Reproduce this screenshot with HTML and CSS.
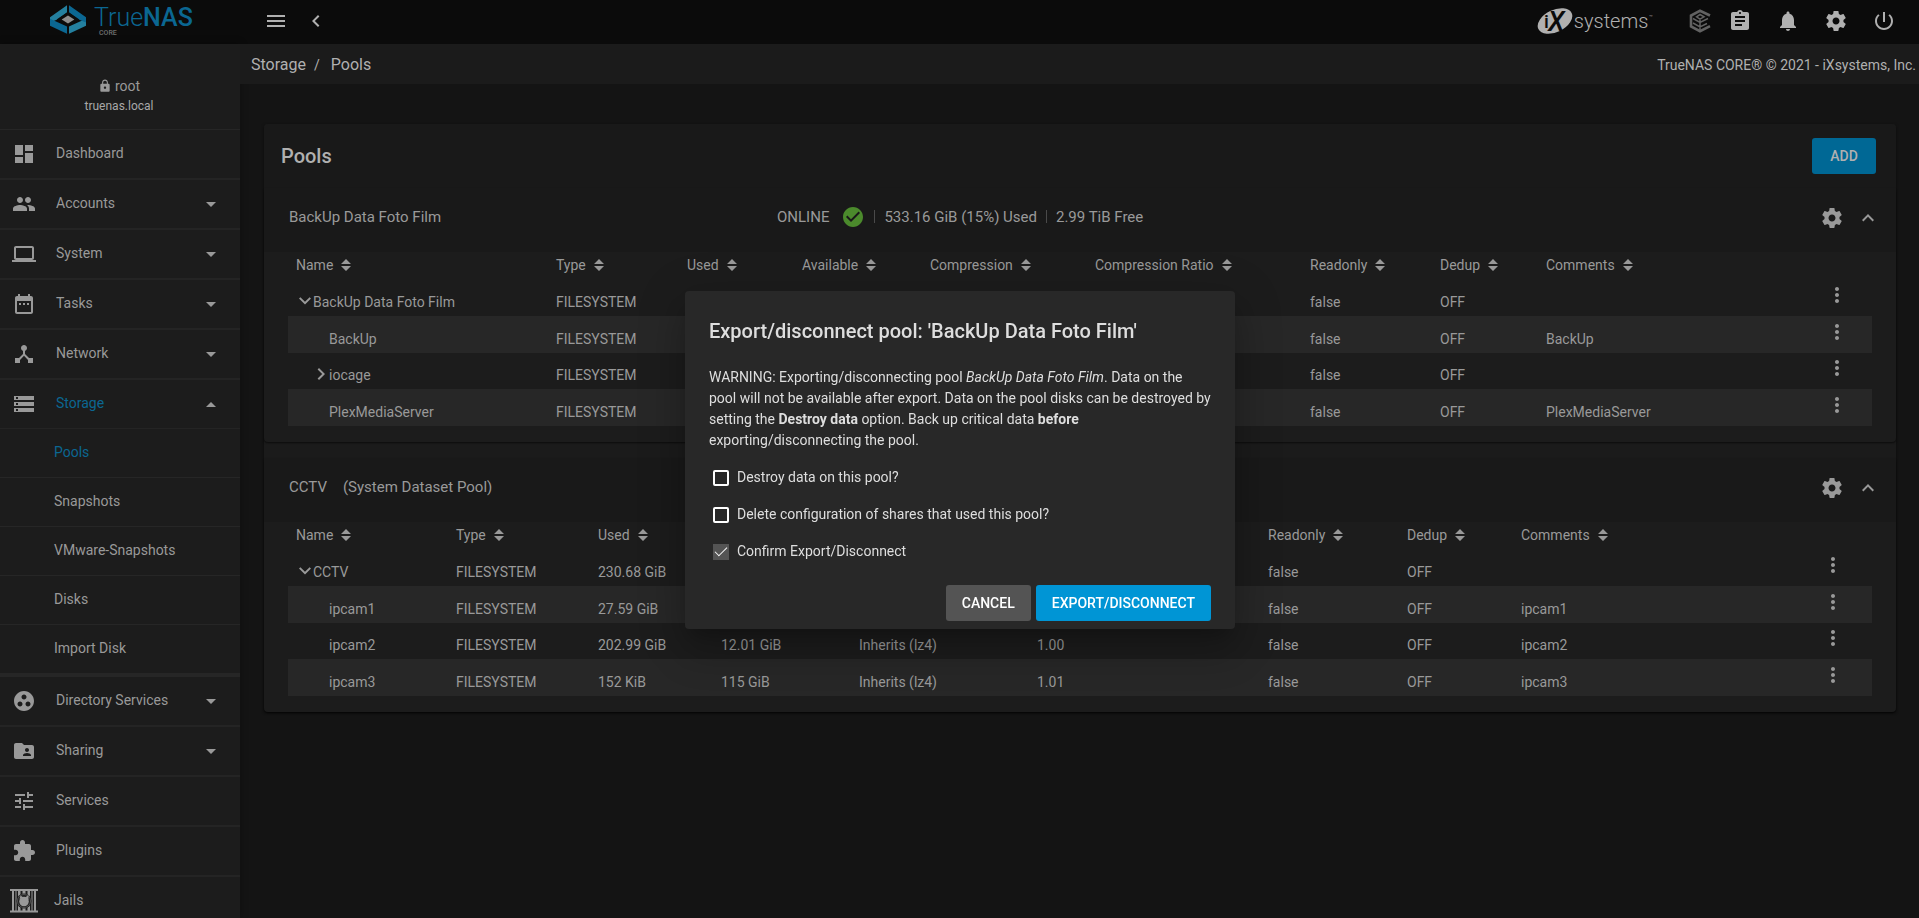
FILE: index.html
```html
<!DOCTYPE html>
<html lang="en">
<head>
<meta charset="utf-8">
<title>TrueNAS - Pools</title>
<link rel="stylesheet" href="styles.css">
</head>
<body>
<svg class="sprite" aria-hidden="true">
  <symbol id="menu" viewBox="0 0 24 24"><path d="M3 18h18v-2H3v2zm0-5h18v-2H3v2zm0-7v2h18V6H3z"/></symbol>
  <symbol id="left" viewBox="0 0 24 24"><path d="M15.41 7.41L14 6l-6 6 6 6 1.41-1.41L10.83 12z"/></symbol>
  <symbol id="up" viewBox="0 0 24 24"><path d="M7.41 15.41L12 10.83l4.59 4.58L18 14l-6-6-6 6z"/></symbol>
  <symbol id="open" viewBox="0 0 12 12"><path d="M1.4 2.2L6 6.8l4.6-4.6L12 3.6l-6 6-6-6z"/></symbol>
  <symbol id="closed" viewBox="0 0 12 12"><path d="M2.6 1.4L7.2 6l-4.6 4.6L4 12l6-6-6-6z"/></symbol>
  <symbol id="drop" viewBox="0 0 10 5"><path d="M0 0l5 5 5-5z"/></symbol>
  <symbol id="rise" viewBox="0 0 10 5"><path d="M0 5l5-5 5 5z"/></symbol>
  <symbol id="sort" viewBox="0 0 10 12"><path d="M0 5l5-5 5 5zM0 7l5 5 5-5z"/></symbol>
  <symbol id="dots" viewBox="0 0 24 24"><path d="M12 8c1.1 0 2-.9 2-2s-.9-2-2-2-2 .9-2 2 .9 2 2 2zm0 2c-1.100 0-2 .9-2 2s.9 2 2 2 2-.9 2-2-.9-2-2-2zm0 6c-1.100 0-2 .9-2 2s.9 2 2 2 2-.9 2-2-.9-2-2-2z"/></symbol>
  <symbol id="gear" viewBox="0 0 24 24"><path d="M19.43 12.98c.04-.32.07-.64.07-.98s-.03-.66-.07-.98l2.11-1.65c.19-.15.24-.42.12-.64l-2-3.46c-.12-.22-.39-.3-.61-.22l-2.49 1c-.52-.4-1.08-.73-1.69-.98l-.38-2.65C14.46 2.18 14.25 2 14 2h-4c-.25 0-.46.18-.49.42l-.38 2.65c-.61.25-1.17.59-1.69.98l-2.49-1c-.23-.09-.49 0-.61.22l-2 3.46c-.13.22-.07.49.12.64l2.110 1.650c-.04.32-.07.65-.07.98s.03.66.07.98l-2.110 1.650c-.19.15-.24.42-.12.64l2 3.460c.12.22.39.3.61.22l2.490-1c.52.4 1.080.73 1.690.98l.38 2.650c.03.24.24.42.49.42h4c.25 0 .46-.18.49-.42l.38-2.650c.61-.25 1.170-.59 1.690-.98l2.490 1c.23.09.49 0 .61-.22l2-3.460c.12-.22.07-.49-.12-.64l-2.110-1.650zM12 15.500c-1.930 0-3.500-1.570-3.500-3.500s1.570-3.500 3.500-3.500 3.500 1.570 3.500 3.500-1.570 3.500-3.500 3.500z"/></symbol>
  <symbol id="bell" viewBox="0 0 24 24"><path d="M12 22c1.1 0 2-.9 2-2h-4c0 1.1.89 2 2 2zm6-6v-5c0-3.070-1.640-5.640-4.500-6.320V4c0-.83-.67-1.500-1.500-1.500s-1.500.67-1.500 1.500v.68C7.630 5.360 6 7.920 6 11v5l-2 2v1h16v-1l-2-2z"/></symbol>
  <symbol id="clipboard" viewBox="0 0 24 24"><path d="M19 3h-4.180C14.400 1.840 13.300 1 12 1c-1.300 0-2.400.84-2.820 2H5c-1.100 0-2 .9-2 2v14c0 1.100.9 2 2 2h14c1.100 0 2-.9 2-2V5c0-1.100-.9-2-2-2zm-7 0c.55 0 1 .45 1 1s-.45 1-1 1-1-.45-1-1 .45-1 1-1zm2 14H7v-2h7v2zm3-4H7v-2h10v2zm0-4H7V7h10v2z"/></symbol>
  <symbol id="power" viewBox="0 0 24 24"><path d="M13 3h-2v10h2V3zm4.830 2.170l-1.420 1.420C17.990 7.860 19 9.810 19 12c0 3.870-3.130 7-7 7s-7-3.130-7-7c0-2.190 1.010-4.140 2.580-5.420L6.170 5.170C4.230 6.820 3 9.260 3 12c0 4.970 4.030 9 9 9s9-4.030 9-9c0-2.740-1.230-5.180-3.170-6.830z"/></symbol>
  <symbol id="lock" viewBox="0 0 24 24"><path d="M18 8h-1V6c0-2.760-2.240-5-5-5S7 3.240 7 6v2H6c-1.100 0-2 .9-2 2v10c0 1.100.9 2 2 2h12c1.100 0 2-.9 2-2V10c0-1.100-.9-2-2-2zm-6 9c-1.100 0-2-.9-2-2s.9-2 2-2 2 .9 2 2-.9 2-2 2zm3.100-9H8.900V6c0-1.710 1.390-3.100 3.100-3.100s3.100 1.390 3.100 3.100v2z"/></symbol>
  <symbol id="ok" viewBox="0 0 24 24"><path d="M12 2C6.480 2 2 6.480 2 12s4.480 10 10 10 10-4.480 10-10S17.520 2 12 2zm-2 15l-5-5 1.410-1.410L10 14.170l7.590-7.590L19 8l-9 9z"/></symbol>
  <symbol id="dashboard" viewBox="0 0 24 24"><path d="M3 13h8V3H3v10zm0 8h8v-6H3v6zm10 0h8V11h-8v10zm0-18v6h8V3h-8z"/></symbol>
  <symbol id="people" viewBox="0 0 24 24"><path d="M16 11c1.660 0 2.990-1.340 2.990-3S17.660 5 16 5s-3 1.340-3 3 1.340 3 3 3zm-8 0c1.660 0 2.990-1.340 2.990-3S9.660 5 8 5 5 6.340 5 8s1.340 3 3 3zm0 2c-2.330 0-7 1.170-7 3.500V19h14v-2.500c0-2.330-4.670-3.500-7-3.500zm8 0c-.29 0-.62.02-.97.05 1.160.84 1.970 1.970 1.970 3.450V19h6v-2.500c0-2.330-4.670-3.500-7-3.500z"/></symbol>
  <symbol id="laptop" viewBox="0 0 24 24"><path d="M20 18c1.100 0 1.990-.9 1.990-2L22 6c0-1.100-.9-2-2-2H4c-1.100 0-2 .9-2 2v10c0 1.100.9 2 2 2H0v2h24v-2h-4zM4 6h16v10H4V6z"/></symbol>
  <symbol id="calendar" viewBox="0 0 24 24"><path d="M9 11H7v2h2v-2zm4 0h-2v2h2v-2zm4 0h-2v2h2v-2zm2-7h-1V2h-2v2H8V2H6v2H5c-1.110 0-1.990.9-1.990 2L3 20c0 1.100.89 2 2 2h14c1.100 0 2-.9 2-2V6c0-1.100-.9-2-2-2zm0 16H5V9h14v11z"/></symbol>
  <symbol id="hub" viewBox="0 0 24 24"><path d="M17 16l-4-4V8.820C14.160 8.400 15 7.300 15 6c0-1.660-1.340-3-3-3S9 4.340 9 6c0 1.300.84 2.400 2 2.820V12l-4 4H3v5h5v-3.050l4-4.200 4 4.200V21h5v-5h-4z"/></symbol>
  <symbol id="storage" viewBox="0 0 24 24"><path d="M2 20h20v-4H2v4zm2-3h2v2H4v-2zM2 4v4h20V4H2zm4 3H4V5h2v2zm-4 7h20v-4H2v4zm2-3h2v2H4v-2z"/></symbol>
  <symbol id="group" viewBox="0 0 24 24"><path d="M12 2C6.480 2 2 6.480 2 12s4.480 10 10 10 10-4.480 10-10S17.520 2 12 2zM8 17.500c-1.380 0-2.500-1.120-2.500-2.500s1.120-2.500 2.500-2.500 2.500 1.120 2.500 2.500-1.120 2.500-2.500 2.500zM9.500 8c0-1.380 1.120-2.500 2.500-2.500s2.500 1.120 2.500 2.500-1.120 2.500-2.500 2.500S9.500 9.380 9.500 8zm6.500 9.500c-1.380 0-2.500-1.120-2.500-2.500s1.120-2.500 2.500-2.500 2.500 1.120 2.500 2.500-1.120 2.500-2.500 2.500z"/></symbol>
  <symbol id="shared" viewBox="0 0 24 24"><path d="M20 6h-8l-2-2H4c-1.100 0-1.990.9-1.990 2L2 18c0 1.100.9 2 2 2h16c1.100 0 2-.9 2-2V8c0-1.100-.9-2-2-2zm-5 3c1.100 0 2 .9 2 2s-.9 2-2 2-2-.9-2-2 .9-2 2-2zm4 8h-8v-1c0-1.330 2.670-2 4-2s4 .67 4 2v1z"/></symbol>
  <symbol id="tune" viewBox="0 0 24 24"><path d="M3 17v2h6v-2H3zM3 5v2h10V5H3zm10 16v-2h8v-2h-8v-2h-2v6h2zM7 9v2H3v2h4v2h2V9H7zm14 4v-2H11v2h10zm-6-4h2V7h4V5h-4V3h-2v6z"/></symbol>
  <symbol id="plugin" viewBox="0 0 24 24"><path d="M20.500 11H19V7c0-1.100-.9-2-2-2h-4V3.500C13 2.120 11.880 1 10.500 1S8 2.120 8 3.500V5H4c-1.100 0-1.990.9-1.990 2v3.800H3.500c1.490 0 2.700 1.210 2.700 2.700s-1.210 2.700-2.700 2.700H2V20c0 1.100.9 2 2 2h3.800v-1.500c0-1.490 1.210-2.700 2.700-2.700s2.700 1.210 2.700 2.700V22H17c1.100 0 2-.9 2-2v-4h1.500c1.380 0 2.500-1.120 2.500-2.500S21.880 11 20.500 11z"/></symbol>
  <symbol id="jail" viewBox="0 0 28 24">
    <path d="M0 0h28v2H0zM0 21.500h28v2H0zM2 2h2v20H2zM5.500 2h1v20h-1zM8 2h2.500v20H8zM12.500 2h3v20h-3zM17.500 2H20v20h-2.500zM21.500 2h1v20h-1zM24 2h2v20h-2z"/>
    <circle cx="14" cy="12" r="7.500" fill="#1c1c1c"/>
    <circle cx="14" cy="12" r="6.500" fill="none" stroke="#777" stroke-width=".6"/>
    <circle cx="14" cy="12.500" r="4.800"/>
    <path d="M9.500 10l1-3.500 3 2zM15 8.500l3.500-2.500v5z"/>
  </symbol>
</svg>

<div class="app">
  <header class="topbar">
    <a class="brand" href="#">
      <svg class="cube" viewBox="0 0 108 86" aria-hidden="true">
        <path fill="#24809f" d="M0 36L51 0v22L22 43 0 52zM57 64l51-23v21L57 86z"/>
        <path fill="#0b6792" d="M57 0l51 36v16l-22-9-29-21zM0 41l51 23v22L0 62z"/>
        <path fill="#0b0b0b" d="M54 20l34 23-34 20-34-20z"/>
        <path fill="#8d8d8d" d="M54 31l19 12-19 12-19-12z"/>
      </svg>
      <span class="wordmark"><span class="brand-name">True<b>NAS</b></span><small>CORE</small></span>
    </a>
    <div class="tools">
      <button class="tool narrow" aria-label="Toggle menu"><svg class="i24"><use href="#menu"/></svg></button>
      <button class="tool narrow" aria-label="Collapse"><svg class="i24"><use href="#left"/></svg></button>
      <a class="vendor" href="#">
        <svg class="vendor-mark" viewBox="0 0 36 34">
          <ellipse cx="18" cy="17" rx="18.500" ry="11" transform="rotate(-26 18 17)" fill="#b0b0b0"/>
          <text x="7" y="24" font-size="19" font-weight="500" fill="#0b0b0b">i</text>
          <text x="11" y="27" font-size="27" font-weight="500" font-style="italic" fill="#0b0b0b">X</text>
        </svg>
        <span>systems</span><small>™</small>
      </a>
      <button class="tool slim" aria-label="TrueCommand">
        <svg class="i24" viewBox="0 0 24 24" fill="none" stroke="#626262">
          <path d="M22 6.500L12 1.800 3 6.500v11l9 4.700 10-5" stroke-width="2.600"/>
          <path d="M12 10v11M5 9.500l7 4 8-4M5 14l7 4 7-3.500M8.500 7.800L12 5.500l4 2.300-4 2.300z" stroke-width="1.500"/>
        </svg>
      </button>
      <button class="tool" aria-label="Task manager"><svg class="i24"><use href="#clipboard"/></svg></button>
      <button class="tool" aria-label="Alerts"><svg class="i24"><use href="#bell"/></svg></button>
      <button class="tool" aria-label="Settings"><svg class="i24"><use href="#gear"/></svg></button>
      <button class="tool" aria-label="Power"><svg class="i24"><use href="#power"/></svg></button>
    </div>
  </header>

  <aside class="sidebar">
    <div class="user">
      <div class="user-name"><svg class="i14"><use href="#lock"/></svg>root</div>
      <div class="host">truenas.local</div>
    </div>
    <nav>
      <a class="item" href="#"><svg class="i24"><use href="#dashboard"/></svg><span>Dashboard</span></a>
      <a class="item" href="#"><svg class="i24"><use href="#people"/></svg><span>Accounts</span><svg class="caret"><use href="#drop"/></svg></a>
      <a class="item" href="#"><svg class="i24"><use href="#laptop"/></svg><span>System</span><svg class="caret"><use href="#drop"/></svg></a>
      <a class="item" href="#"><svg class="i24"><use href="#calendar"/></svg><span>Tasks</span><svg class="caret"><use href="#drop"/></svg></a>
      <a class="item" href="#"><svg class="i24"><use href="#hub"/></svg><span>Network</span><svg class="caret"><use href="#drop"/></svg></a>
      <a class="item open" href="#"><svg class="i24"><use href="#storage"/></svg><span>Storage</span><svg class="caret"><use href="#rise"/></svg></a>
      <div class="subnav">
        <a class="sub current" href="#">Pools</a>
        <a class="sub" href="#">Snapshots</a>
        <a class="sub" href="#">VMware-Snapshots</a>
        <a class="sub" href="#">Disks</a>
        <a class="sub" href="#">Import Disk</a>
      </div>
      <a class="item" href="#"><svg class="i24"><use href="#group"/></svg><span>Directory Services</span><svg class="caret"><use href="#drop"/></svg></a>
      <a class="item" href="#"><svg class="i24"><use href="#shared"/></svg><span>Sharing</span><svg class="caret"><use href="#drop"/></svg></a>
      <a class="item" href="#"><svg class="i24"><use href="#tune"/></svg><span>Services</span></a>
      <a class="item" href="#"><svg class="i24"><use href="#plugin"/></svg><span>Plugins</span></a>
      <a class="item jails" href="#"><svg class="i28"><use href="#jail"/></svg><span>Jails</span></a>
    </nav>
  </aside>

  <main class="main">
    <div class="crumbs">
      <nav class="trail"><a href="#">Storage</a><span class="slash">/</span><a href="#">Pools</a></nav>
      <span class="copyright">TrueNAS CORE® © 2021 - iXsystems, Inc.</span>
    </div>

    <section class="card">
      <div class="card-head">
        <h1>Pools</h1>
        <button class="btn add">ADD</button>
      </div>

      <section class="pool">
        <div class="pool-head">
          <div class="pool-name">BackUp Data Foto Film</div>
          <div class="status"><span>ONLINE</span><svg class="i24 ok"><use href="#ok"/></svg><i class="bar"></i><span>533.16 GiB (15%) Used</span><i class="bar"></i><span>2.99 TiB Free</span></div>
          <div class="pool-tools">
            <button class="icon" aria-label="Pool settings"><svg class="i24"><use href="#gear"/></svg></button>
            <button class="icon" aria-label="Collapse pool"><svg class="i24"><use href="#up"/></svg></button>
          </div>
        </div>
        <div class="pool-body">
          <table class="grid backup">
            <colgroup><col class="c1"><col class="c2"><col class="c3"><col class="c4"><col class="c5"><col class="c6"><col class="c7"><col class="c8"><col><col class="c10"></colgroup>
            <thead><tr>
              <th>Name<svg class="sort"><use href="#sort"/></svg></th><th>Type<svg class="sort"><use href="#sort"/></svg></th><th>Used<svg class="sort"><use href="#sort"/></svg></th><th>Available<svg class="sort"><use href="#sort"/></svg></th><th>Compression<svg class="sort"><use href="#sort"/></svg></th><th>Compression Ratio<svg class="sort"><use href="#sort"/></svg></th><th>Readonly<svg class="sort"><use href="#sort"/></svg></th><th>Dedup<svg class="sort"><use href="#sort"/></svg></th><th>Comments<svg class="sort"><use href="#sort"/></svg></th><th></th>
            </tr></thead>
            <tbody>
              <tr><td><svg class="twist"><use href="#open"/></svg>BackUp Data Foto Film</td><td>FILESYSTEM</td><td></td><td></td><td></td><td></td><td>false</td><td>OFF</td><td></td><td class="more"><button class="icon" aria-label="Options"><svg class="i24"><use href="#dots"/></svg></button></td></tr>
              <tr><td class="leaf">BackUp</td><td>FILESYSTEM</td><td></td><td></td><td></td><td></td><td>false</td><td>OFF</td><td>BackUp</td><td class="more"><button class="icon" aria-label="Options"><svg class="i24"><use href="#dots"/></svg></button></td></tr>
              <tr><td class="branch"><svg class="twist"><use href="#closed"/></svg>iocage</td><td>FILESYSTEM</td><td></td><td></td><td></td><td></td><td>false</td><td>OFF</td><td></td><td class="more"><button class="icon" aria-label="Options"><svg class="i24"><use href="#dots"/></svg></button></td></tr>
              <tr><td class="leaf">PlexMediaServer</td><td>FILESYSTEM</td><td></td><td></td><td></td><td></td><td>false</td><td>OFF</td><td>PlexMediaServer</td><td class="more"><button class="icon" aria-label="Options"><svg class="i24"><use href="#dots"/></svg></button></td></tr>
            </tbody>
          </table>
        </div>
      </section>

      <section class="pool">
        <div class="pool-head">
          <div class="pool-name">CCTV<span class="note">(System Dataset Pool)</span></div>
          <div class="status"></div>
          <div class="pool-tools">
            <button class="icon" aria-label="Pool settings"><svg class="i24"><use href="#gear"/></svg></button>
            <button class="icon" aria-label="Collapse pool"><svg class="i24"><use href="#up"/></svg></button>
          </div>
        </div>
        <div class="pool-body">
          <table class="grid cctv">
            <colgroup><col class="c1"><col class="c2"><col class="c3"><col class="c4"><col class="c5"><col class="c6"><col class="c7"><col class="c8"><col><col class="c10"></colgroup>
            <thead><tr>
              <th>Name<svg class="sort"><use href="#sort"/></svg></th><th>Type<svg class="sort"><use href="#sort"/></svg></th><th>Used<svg class="sort"><use href="#sort"/></svg></th><th></th><th></th><th></th><th>Readonly<svg class="sort"><use href="#sort"/></svg></th><th>Dedup<svg class="sort"><use href="#sort"/></svg></th><th>Comments<svg class="sort"><use href="#sort"/></svg></th><th></th>
            </tr></thead>
            <tbody>
              <tr><td><svg class="twist"><use href="#open"/></svg>CCTV</td><td>FILESYSTEM</td><td>230.68 GiB</td><td></td><td></td><td></td><td>false</td><td>OFF</td><td></td><td class="more"><button class="icon" aria-label="Options"><svg class="i24"><use href="#dots"/></svg></button></td></tr>
              <tr><td class="leaf">ipcam1</td><td>FILESYSTEM</td><td>27.59 GiB</td><td></td><td></td><td></td><td>false</td><td>OFF</td><td>ipcam1</td><td class="more"><button class="icon" aria-label="Options"><svg class="i24"><use href="#dots"/></svg></button></td></tr>
              <tr><td class="leaf">ipcam2</td><td>FILESYSTEM</td><td>202.99 GiB</td><td>12.01 GiB</td><td>Inherits (lz4)</td><td>1.00</td><td>false</td><td>OFF</td><td>ipcam2</td><td class="more"><button class="icon" aria-label="Options"><svg class="i24"><use href="#dots"/></svg></button></td></tr>
              <tr><td class="leaf">ipcam3</td><td>FILESYSTEM</td><td>152 KiB</td><td>115 GiB</td><td>Inherits (lz4)</td><td>1.01</td><td>false</td><td>OFF</td><td>ipcam3</td><td class="more"><button class="icon" aria-label="Options"><svg class="i24"><use href="#dots"/></svg></button></td></tr>
            </tbody>
          </table>
        </div>
      </section>
    </section>
  </main>
</div>

<div class="backdrop">
  <form class="dialog" role="dialog" aria-labelledby="dlg-title">
    <h2 id="dlg-title">Export/disconnect pool: 'BackUp Data Foto Film'</h2>
    <p>WARNING: Exporting/disconnecting pool <em>BackUp Data Foto Film</em>. Data on the pool will not be available after export. Data on the pool disks can be destroyed by setting the <b>Destroy data</b> option. Back up critical data <b>before</b> exporting/disconnecting the pool.</p>
    <label class="check"><input type="checkbox"><span>Destroy data on this pool?</span></label>
    <label class="check"><input type="checkbox"><span>Delete configuration of shares that used this pool?</span></label>
    <label class="check"><input type="checkbox" checked><span>Confirm Export/Disconnect</span></label>
    <div class="actions">
      <button type="button" class="btn cancel">CANCEL</button>
      <button type="button" class="btn primary">EXPORT/DISCONNECT</button>
    </div>
  </form>
</div>
</body>
</html>
```

FILE: styles.css
```css
* { box-sizing: border-box; }

body {
  margin: 0;
  background: #141414;
  color: #999;
  font: 14px/20px Roboto, "Liberation Sans", sans-serif;
}

a { color: inherit; text-decoration: none; }
h1, h2, p { margin: 0; }

button {
  font: inherit;
  color: inherit;
  background: none;
  border: 0;
  padding: 0;
}

svg { fill: currentColor; display: block; flex: none; }
svg[fill="none"] { fill: none; }
.sprite { position: absolute; width: 0; height: 0; }
.i14 { width: 14px; height: 14px; }
.i24 { width: 24px; height: 24px; }
.i28 { width: 28px; height: 24px; }

.app {
  display: grid;
  grid-template-columns: 240px minmax(0, 1fr);
  grid-template-rows: 44px minmax(0, 1fr);
  height: 100vh;
  overflow: hidden;
}

/* Top bar */
.topbar {
  grid-column: 1 / -1;
  display: grid;
  grid-template-columns: 240px 1fr;
  background: #0b0b0b;
  color: #b0b0b0;
}
.brand {
  display: flex;
  gap: 8px;
  padding: 5px 0 0 50px;
  color: #0b6792;
}
.cube { width: 36px; height: 29px; }
.wordmark { display: flex; flex-direction: column; }
.brand-name { font-size: 25px; line-height: 25px; font-weight: 300; }
.brand-name b { font-weight: 500; }
.wordmark small {
  font-size: 7px;
  line-height: 6px;
  font-weight: 500;
  padding-left: 5px;
  color: #707070;
}
.tools { display: flex; align-items: center; padding: 0 11px 2px 16px; }
.tool { width: 48px; height: 40px; display: flex; align-items: center; justify-content: center; }
.narrow { width: 40px; }
.slim { width: 32px; }
.vendor {
  display: flex;
  align-items: center;
  gap: 1px;
  margin: 0 31px 0 auto;
  font-size: 20px;
  font-weight: 300;
}
.vendor-mark { width: 36px; height: 34px; }
.vendor small { font-size: 6px; padding-bottom: 8px; }

/* Sidebar */
.sidebar {
  background: #1c1c1c;
  box-shadow: 0 0 8px rgba(0, 0, 0, .3);
  overflow: hidden;
}
.user {
  height: 86px;
  padding: 32px 2px 0 0;
  border-bottom: 1px solid #262626;
  text-align: center;
}
.user-name { display: flex; justify-content: center; align-items: center; gap: 3px; }
.host { font-size: 12px; color: #a8a8a8; }
.item {
  display: flex;
  align-items: center;
  height: 50px;
  padding: 0 24px 0 12px;
  border-bottom: 2px solid #242424;
}
.item span { flex: 1; padding: 0 0 2px 20px; }
.item.open { height: 49px; border-bottom-width: 1px; }
.item.open span, .sub.current { color: #0b6792; }
.item.jails { padding-left: 10px; }
.item.jails span { padding-left: 16px; }
.caret { width: 10px; height: 5px; }
.subnav { border-bottom: 3px solid #262626; }
.sub {
  display: flex;
  align-items: center;
  height: 49px;
  padding: 0 0 2px 54px;
  border-bottom: 1px solid #262626;
}

/* Breadcrumb row */
.crumbs {
  display: flex;
  justify-content: space-between;
  align-items: center;
  height: 40px;
  padding: 1px 3px 0 11px;
  background: #1b1b1b;
  color: #b0b0b0;
}
.trail { display: flex; font-size: 16px; }
.slash { padding: 0 11px 0 8px; font-size: 14px; }

/* Card */
.card {
  margin: 40px 23px 0 24px;
  background: #1b1b1b;
  border-radius: 4px;
  box-shadow: 0 1px 3px rgba(0, 0, 0, .5);
}
.card-head {
  display: flex;
  justify-content: space-between;
  align-items: center;
  height: 64px;
  padding: 0 20px 0 17px;
  background: #191919;
  border-radius: 4px 4px 0 0;
}
h1 { font-size: 20px; font-weight: 500; color: #b0b0b0; }
.btn {
  height: 36px;
  padding: 0 16px;
  border-radius: 3px;
  font-weight: 500;
}
.add { width: 64px; background: #006895; color: #b0b0b0; }

.pool {
  background: #1c1c1c;
  border-radius: 4px;
  box-shadow: 0 1px 2px rgba(0, 0, 0, .6);
}
.pool + .pool { margin-top: 16px; }
.pool-head {
  display: grid;
  grid-template-columns: 488px 1fr auto;
  align-items: center;
  height: 64px;
  padding: 0 16px 5px 25px;
  background: #191919;
  font-size: 15px;
}
.pool-name { padding-bottom: 2px; }
.note { padding-left: 16px; }
.status { display: flex; align-items: center; padding-bottom: 2px; }
.ok { color: #4b8a2c; margin-left: 12px; }
.bar { width: 1px; height: 13px; margin: 0 9px; background: #4a4a4a; }
.pool-tools { display: flex; gap: 12px; }
.pool-body { padding: 0 24px 16px; }

/* Dataset tables */
.grid { width: 100%; table-layout: fixed; border-collapse: collapse; }
.grid th {
  height: 28px;
  padding: 0 0 3px 8px;
  text-align: left;
  font-weight: 400;
}
.grid td { height: 36px; padding: 8px 0 0 8px; vertical-align: middle; }
.grid tr:nth-child(even) td { height: 37px; background: #272727; }
.sort { display: inline-block; width: 10px; height: 12px; margin-left: 8px; vertical-align: -1px; }
.twist { display: inline-block; width: 12px; height: 12px; margin: 0 2px 0 3px; }
.grid .branch { padding-left: 24px; }
.grid .leaf { padding-left: 41px; }
.grid .more { padding: 0 0 6px; }
.more .icon { display: block; margin: auto; }

.backup .c1 { width: 260px; }
.backup .c2 { width: 131px; }
.backup .c3 { width: 115px; }
.backup .c4 { width: 128px; }
.backup .c5 { width: 165px; }
.backup .c6 { width: 215px; }
.backup .c7 { width: 130px; }
.backup .c8 { width: 106px; }
.backup .c10 { width: 70px; }

.cctv .c1 { width: 160px; }
.cctv .c2 { width: 142px; }
.cctv .c3 { width: 123px; }
.cctv .c4 { width: 138px; }
.cctv .c5 { width: 178px; }
.cctv .c6 { width: 231px; }
.cctv .c7 { width: 139px; }
.cctv .c8 { width: 114px; }
.cctv .c10 { width: 78px; }

/* Dialog */
.backdrop {
  position: fixed;
  inset: 0;
  display: flex;
  align-items: center;
  justify-content: center;
  padding: 2px 0 0 1px;
}
.dialog {
  width: 550px;
  padding: 24px 24px 8px;
  background: #282828;
  color: #dedede;
  border-radius: 4px;
  box-shadow: 0 11px 15px -7px rgba(0, 0, 0, .2), 0 24px 38px 3px rgba(0, 0, 0, .14), 0 9px 46px 8px rgba(0, 0, 0, .12);
}
.dialog h2 { font-size: 20px; line-height: 32px; font-weight: 500; margin-bottom: 20px; }
.dialog p { line-height: 21px; margin-bottom: 8px; }
.check { display: flex; align-items: center; gap: 8px; height: 37px; padding-left: 4px; }
.check span { padding-bottom: 2px; }
.check input {
  appearance: none;
  display: grid;
  place-items: center;
  width: 16px;
  height: 16px;
  margin: 0;
  border: 2px solid #fff;
  border-radius: 2px;
}
.check input:checked { border: 0; border-radius: 0; background: #545454; }
.check input:checked::before {
  content: "";
  width: 11px;
  height: 5px;
  margin-bottom: 3px;
  border: solid #fff;
  border-width: 0 0 1px 1px;
  transform: rotate(-45deg);
}
.actions { display: flex; justify-content: flex-end; gap: 5px; margin-top: 15px; }
.cancel { background: #545454; color: #fff; }
.primary { background: #0095d5; color: #fff; }
```
